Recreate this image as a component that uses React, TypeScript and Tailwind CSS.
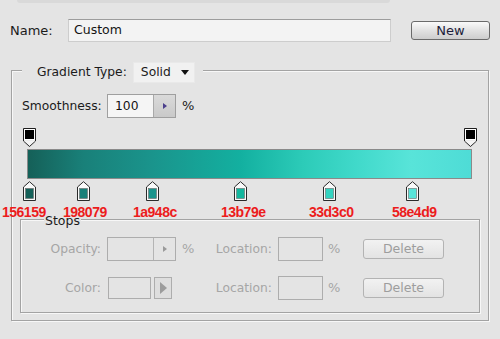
import React from "react";

const stops = [
  { hex: "156159", cx: 29, lx: 2 },
  { hex: "198079", cx: 83, lx: 63 },
  { hex: "1a948c", cx: 152, lx: 133 },
  { hex: "13b79e", cx: 240, lx: 221 },
  { hex: "33d3c0", cx: 329, lx: 309 },
  { hex: "58e4d9", cx: 412, lx: 392 },
];

function TopStop() {
  return (
    <svg width="13" height="19" viewBox="0 0 13 19">
      <path d="M0.5 0.5 H12.5 V13 L6.5 18.5 L0.5 13 Z" fill="#d4d4d4" stroke="#1e1e1e" />
      <rect x="1" y="1" width="11" height="11" fill="#fff" />
      <rect x="2" y="2" width="9" height="9" fill="#000" />
      <path d="M1 12.3 H12 V12.8 L6.5 17.8 L1 12.8 Z" fill="#f4f4f4" />
    </svg>
  );
}

function ColorStop({ color }: { color: string }) {
  return (
    <svg width="13" height="20" viewBox="0 0 13 20">
      <path d="M6.5 0.7 L12.5 6 V19.5 H0.5 V6 Z" fill="#fafafa" stroke="#2a2a2a" />
      <rect x="2.5" y="7.5" width="8" height="10" fill={color} stroke="#6a6a6a" strokeWidth="0.6" />
    </svg>
  );
}

export default function App() {
  return (
    <div className="w-[500px] h-[339px] overflow-hidden bg-[#e4e4e4] font-['DejaVu_Sans',Verdana,sans-serif] text-[12px] text-[#1b1b1b]">
      <div className="ml-[17px] w-[373px] h-[3px] bg-[#d9d9d9] rounded-b-[3px]" />

      {/* Name row */}
      <div className="mt-[16px] flex items-center h-[23px] pl-[10px]">
        <div className="w-[58px] text-[13px]">Name:</div>
        <div className="w-[323px] h-[23px] bg-[#f3f3f3] border border-[#cdcdcd] border-t-[#9c9c9c] flex items-center pl-[5px] text-[12.5px] text-[#141414]">
          Custom
        </div>
        <button className="ml-[20px] w-[79px] h-[19px] rounded-[3px] border border-[#6a6a6a] bg-[linear-gradient(to_bottom,#fafafa,#e4e4e4_45%,#cdcdcd)] text-[13px] leading-none text-[#1d1d3a] flex items-center justify-center">
          New
        </button>
      </div>

      {/* Outer group */}
      <div className="ml-[11px] mt-[28px] w-[478px] h-[251px] border border-[#a3a3a3] shadow-[inset_1px_1px_0_#f7f7f7,1px_1px_0_#f7f7f7]">
        <div className="-mt-[9px] ml-[10px] flex w-fit items-center h-[21px] bg-[#e4e4e4] pl-[15px] pr-[8px]">
          <span className="text-[12.3px]">Gradient Type:</span>
          <div className="ml-[6px] w-[62px] h-[21px] bg-[#f1f1f1] border border-[#e9e9e9] flex items-center pl-[7px] relative">
            <span className="text-[12.3px]">Solid</span>
            <svg className="ml-auto mr-[5px]" width="8" height="5" viewBox="0 0 8 5">
              <path d="M0 0 H8 L4 5 Z" fill="#111" />
            </svg>
          </div>
        </div>

        {/* Smoothness */}
        <div className="mt-[11px] flex items-center h-[24px] pl-[10px]">
          <span className="w-[85px] text-[12.3px]">Smoothness:</span>
          <div className="w-[69px] h-[24px] border border-[#9f9f9f] flex bg-[#f5f5f5]">
            <div className="w-[45px] flex items-center pl-[7px] text-[12.3px] text-[#111]">100</div>
            <div className="flex-1 border-l border-[#a9a9a9] bg-[linear-gradient(to_bottom,#dadada,#c9c9c9)] flex items-center justify-center">
              <svg width="4" height="6" viewBox="0 0 4 6">
                <path d="M0 0 L4 3 L0 6 Z" fill="#4b3f8c" />
              </svg>
            </div>
          </div>
          <span className="ml-[6px] text-[13px]">%</span>
        </div>

        {/* Gradient editor */}
        <div className="ml-[15px] mt-[10px] w-[445px]">
          <div className="relative h-[19px]">
            <div className="absolute left-[-4px] top-0">
              <TopStop />
            </div>
            <div className="absolute left-[437px] top-0">
              <TopStop />
            </div>
          </div>
          <div className="mt-[2px] h-[30px] border border-[#8a8a8a] bg-[linear-gradient(to_right,#156159_0.4%,#198079_12.4%,#1a948c_28%,#13b0a0_48%,#2ccbb8_62%,#40d9ca_74%,#58e4d9_86.5%,#4edcd6_100%)]" />
          <div className="relative mt-[2px] h-[19px]">
            {stops.map((s) => (
              <React.Fragment key={s.hex}>
                <div className="absolute top-0" style={{ left: s.cx - 27 - 6 }}>
                  <ColorStop color={"#" + s.hex} />
                </div>
                <div
                  className="absolute top-[23px] z-10 whitespace-nowrap font-['Liberation_Sans',Arial,sans-serif] font-bold text-[14px] leading-[16px] text-[#ec1c1c] tracking-[-0.5px]"
                  style={{ left: s.lx - 27 }}
                >
                  {s.hex}
                </div>
              </React.Fragment>
            ))}
          </div>
        </div>

        {/* Stops group */}
        <div className="ml-[8px] mt-[19px] w-[460px] h-[94px] border border-[#a3a3a3] shadow-[inset_1px_1px_0_#f7f7f7,1px_1px_0_#f7f7f7]">
          <div className="-mt-[7px] ml-[23px] w-fit px-[1px] h-[16px] bg-[#e4e4e4] flex items-center text-[12.5px] text-[#1b1b1b]">
            Stops
          </div>

          {/* Opacity row */}
          <div className="mt-[8px] flex items-center h-[24px] text-[12.3px] text-[#a6a6a6]">
            <div className="w-[80px] text-right">Opacity:</div>
            <div className="ml-[6px] w-[69px] h-[24px] border border-[#adadad] flex">
              <div className="w-[45px]" />
              <div className="flex-1 border-l border-[#b4b4b4] flex items-center justify-center">
                <svg width="4" height="6" viewBox="0 0 4 6">
                  <path d="M0 0 L4 3 L0 6 Z" fill="#9a9a9a" />
                </svg>
              </div>
            </div>
            <div className="ml-[6px] w-[14px] text-[13px]">%</div>
            <div className="w-[76px] text-right">Location:</div>
            <div className="ml-[6px] w-[45px] h-[24px] border border-[#adadad]" />
            <div className="ml-[5px] w-[35px] text-[13px]">%</div>
            <div className="w-[81px] h-[20px] rounded-[3px] border border-[#b3b3b3] bg-[linear-gradient(to_bottom,#f2f2f2,#e3e3e3)] flex items-center justify-center text-[12.5px] text-[#9d9d9d]">
              Delete
            </div>
          </div>

          {/* Color row */}
          <div className="mt-[15px] flex items-center h-[24px] text-[12.3px] text-[#a6a6a6]">
            <div className="w-[80px] text-right">Color:</div>
            <div className="ml-[7px] w-[43px] h-[22px] border border-[#adadad]" />
            <div className="ml-[3px] w-[18px] h-[22px] border border-[#adadad] bg-[#dedede] flex items-center justify-center">
              <svg width="7" height="12" viewBox="0 0 7 12">
                <path d="M0 0 L7 6 L0 12 Z" fill="#9c9c9c" />
              </svg>
            </div>
            <div className="ml-[24px] w-[76px] text-right">Location:</div>
            <div className="ml-[6px] w-[45px] h-[24px] border border-[#adadad]" />
            <div className="ml-[5px] w-[35px] text-[13px]">%</div>
            <div className="w-[81px] h-[20px] rounded-[3px] border border-[#b3b3b3] bg-[linear-gradient(to_bottom,#f2f2f2,#e3e3e3)] flex items-center justify-center text-[12.5px] text-[#9d9d9d]">
              Delete
            </div>
          </div>
        </div>
      </div>
    </div>
  );
}
